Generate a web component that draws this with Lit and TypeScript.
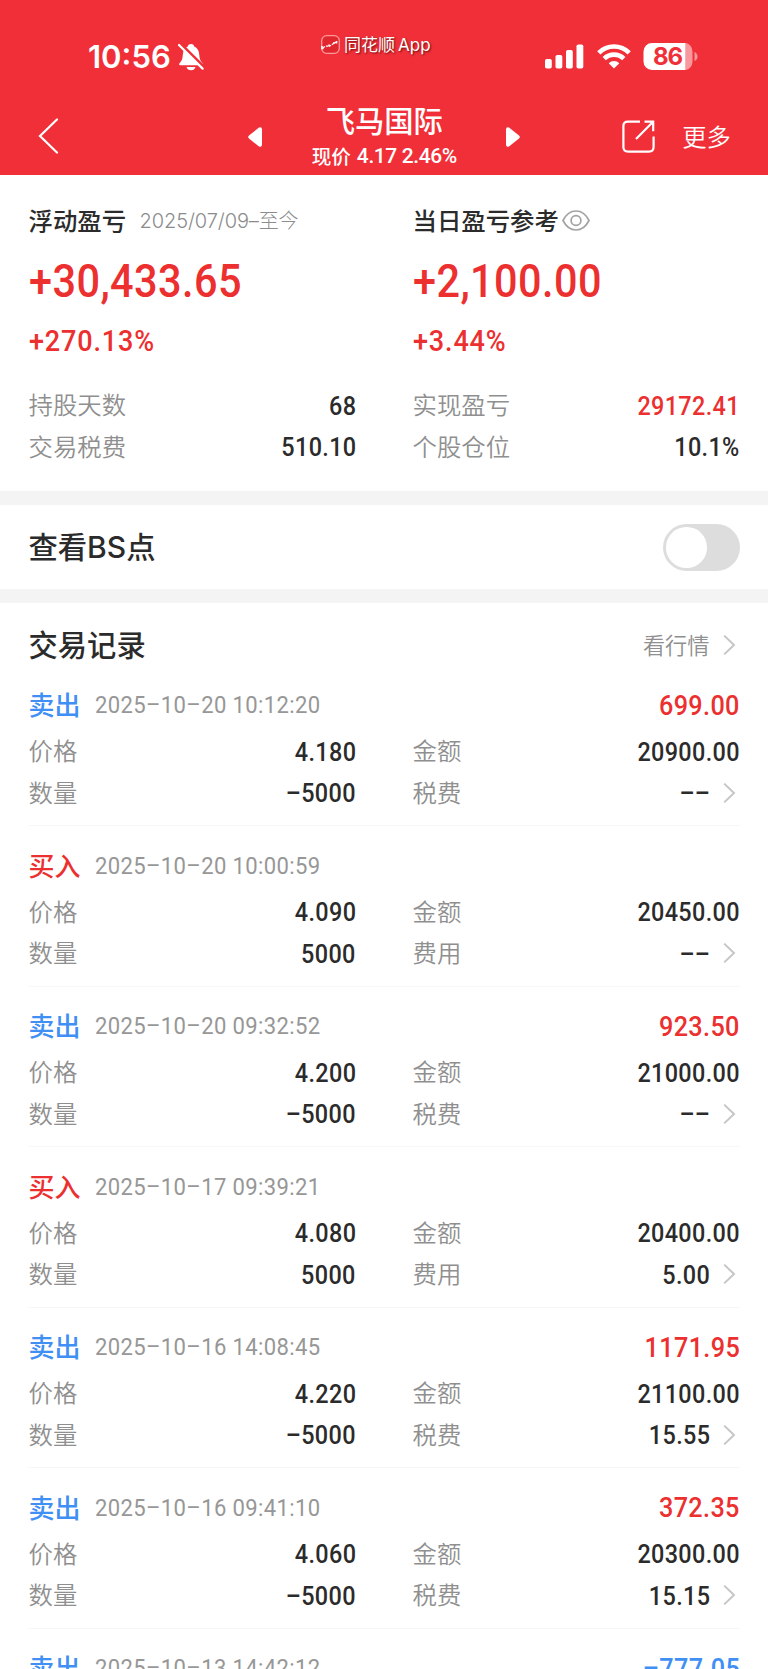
import { LitElement, html, css, svg, nothing } from "lit";
import { customElement, property } from "lit/decorators.js";

interface Trade {
  side: "buy" | "sell";
  time: string;
  profit?: string;
  loss?: boolean;
  price: string;
  qty: string;
  amount: string;
  fee: string;
}

const trades: Trade[] = [
  { side: "sell", time: "2025–10–20 10:12:20", profit: "699.00", price: "4.180", qty: "–5000", amount: "20900.00", fee: "––" },
  { side: "buy", time: "2025–10–20 10:00:59", price: "4.090", qty: "5000", amount: "20450.00", fee: "––" },
  { side: "sell", time: "2025–10–20 09:32:52", profit: "923.50", price: "4.200", qty: "–5000", amount: "21000.00", fee: "––" },
  { side: "buy", time: "2025–10–17 09:39:21", price: "4.080", qty: "5000", amount: "20400.00", fee: "5.00" },
  { side: "sell", time: "2025–10–16 14:08:45", profit: "1171.95", price: "4.220", qty: "–5000", amount: "21100.00", fee: "15.55" },
  { side: "sell", time: "2025–10–16 09:41:10", profit: "372.35", price: "4.060", qty: "–5000", amount: "20300.00", fee: "15.15" },
  { side: "sell", time: "2025–10–13 14:42:12", profit: "–777.05", loss: true, price: "4.080", qty: "–5000", amount: "20400.00", fee: "15.20" },
];

const chevron = html`<svg class="chev" width="13" height="22" viewBox="0 0 13 22" fill="none">
  ${svg`<path d="M1.2 1.6L11 11L1.2 20.4" stroke="#c6c6c6" stroke-width="2"/>`}
</svg>`;

const shared = css`
  :host { display: block; }
  * { box-sizing: border-box; }
  svg { display: block; flex: none; }
  .num {
    display: block;
    font-family: Roboto, "Noto Sans CJK SC", sans-serif;
    font-size: 26px;
    font-weight: 500;
    letter-spacing: 0.400px;
    line-height: 30px;
    color: #2b2b2b;
    padding-top: 1px;
    white-space: nowrap;
    margin-right: -0.600px;
    transform: scaleX(0.9);
    transform-origin: right center;
  }
  .lab { font-size: 24.400px; font-weight: 350; line-height: 36px; color: #8f8f8f; white-space: nowrap; padding-bottom: 2px; }
  .pair { display: flex; align-items: center; justify-content: space-between; height: 41.400px; }
  .red { color: #ec2f2f; }
  .chev { margin-left: 13px; margin-right: 4px; }
  .fee { display: flex; align-items: center; }
`;

@customElement("status-bar")
class StatusBar extends LitElement {
  static styles = css`
    :host { display: grid; grid-template-columns: 233px auto 1fr; height: 90px; padding: 0 70px 0 88px; }
    svg { display: block; flex: none; }
    .left { display: flex; align-items: center; gap: 7px; height: 114px; }
    .time { font: 600 31px/36px Inter, sans-serif; letter-spacing: 0; }
    .app { display: flex; align-items: center; gap: 4px; height: 88px; font-size: 17px; letter-spacing: 0; text-shadow: 1px 1px 2px rgba(60, 0, 0, 0.75); }
    .app span { white-space: nowrap; line-height: 24px; }
    .latin { font-family: Inter, sans-serif; font-size: 17px; margin-left: 3px; }
    .right { display: flex; align-items: center; justify-content: flex-end; height: 113px; }
    .wifi { margin: 0 12px 0 13px; }
    .cell { font: 700 24px Inter, sans-serif; fill: #f12f38; }
  `;
  render() {
    return html`
      <div class="left">
        <span class="time">10:56</span>
        <svg width="26" height="28" viewBox="0 0 26 28" fill="none">
          <path d="M13 1c2 0 3 1.200 3.200 2.600C19.500 5 21 8 21.300 12c.3 4 1 6 3.200 8.200.8.900.4 2-.8 2H2.300c-1.200 0-1.600-1.100-.8-2C3.800 18 4.500 16 4.800 12 5.100 8 6.500 5 9.800 3.600 10 2.200 11 1 13 1z" fill="#fff"/>
          <path d="M8.500 24h9c-.5 2-2.200 3.300-4.500 3.300S9 26 8.500 24z" fill="#fff"/>
          <path d="M2.600 .8L26.500 24.500" stroke="#f12f38" stroke-width="3"/>
          <path d="M1 2L24.600 25.600" stroke="#fff" stroke-width="2.200" stroke-linecap="round"/>
        </svg>
      </div>
      <div class="app">
        <svg width="19" height="19" viewBox="0 0 19 19" fill="none">
          <rect x=".7" y=".7" width="17.600" height="17.600" rx="5" fill="#e0262f" stroke="#f99" stroke-width="1.300"/>
          <path d="M2 12.500l3.500-1.500 3 .2 2.500-1.700 3.500-2 2-1" stroke="#fff" stroke-width="1.200" stroke-dasharray="2.200 1"/>
          <path d="M1 11v2.500h1.600M8 9.500v2M13 7v2M15.500 6v2.500" stroke="#fff" stroke-width="1.600"/>
        </svg>
        <span>同花顺<span class="latin">App</span></span>
      </div>
      <div class="right">
        <svg width="39" height="25" viewBox="0 0 39 25" fill="#fff">
          <rect x="0" y="15" width="6.800" height="9.500" rx="1.800"/><rect x="10.500" y="11" width="6.800" height="13.500" rx="1.800"/>
          <rect x="21" y="6" width="6.800" height="18.500" rx="1.800"/><rect x="31.500" y=".5" width="6.800" height="24" rx="1.800"/>
        </svg>
        <svg class="wifi" width="34" height="25" viewBox="0 0 34 25" fill="none">
          <path d="M1.800 8.800a21.500 21.500 0 0 1 30.400 0" stroke="#fff" stroke-width="4.600"/>
          <path d="M7.200 14.600a14 14 0 0 1 19.600 0" stroke="#fff" stroke-width="4.600"/>
          <path d="M17 24.500l-5.300-5.300a7.600 7.600 0 0 1 10.600 0z" fill="#fff"/>
        </svg>
        <svg width="55" height="27" viewBox="0 0 55 27">
          <path d="M9 0H42.500V27H9a8.500 8.500 0 0 1-8.500-8.500V8.500A8.500 8.500 0 0 1 9 0z" fill="#fff"/>
          <path d="M42.500 0a7.500 8.500 0 0 1 7 8.500v10a7.500 8.500 0 0 1-7 8.500z" fill="#fff" opacity=".5"/>
          <path d="M51.500 9q3 1.500 3 4.500t-3 4.500z" fill="#fff" opacity=".5"/>
          <text class="cell" x="25" y="22" text-anchor="middle" textLength="30">86</text>
        </svg>
      </div>`;
  }
}

@customElement("nav-bar")
class NavBar extends LitElement {
  static styles = css`
    :host { display: grid; grid-template-columns: 1fr 272px 1fr; height: 85px; padding: 0 37px 0 37.500px; }
    svg { display: block; flex: none; }
    .side { display: flex; align-items: center; height: 92px; }
    .end { justify-content: flex-end; gap: 27px; font-size: 24.400px; font-weight: 350; line-height: 36px; }
    .mid { display: flex; justify-content: space-between; align-items: flex-start; }
    .tri { margin-top: 37px; }
    .names { display: flex; flex-direction: column; align-items: center; padding-top: 9px; }
    .title { font-size: 29.300px; font-weight: 500; line-height: 40px; }
    .quote { display: flex; align-items: center; gap: 6px; margin-top: 2px; font-size: 19.600px; font-weight: 500; line-height: 28px; white-space: nowrap; }
    .q { font-family: Roboto, sans-serif; font-size: 21px; letter-spacing: -0.400px; padding-top: 1px; }
  `;
  render() {
    return html`
      <div class="side">
        <svg width="21" height="36" viewBox="0 0 21 36" fill="none"><path d="M19 1.500L2 18l17 16.500" stroke="#fff" stroke-width="2.200" stroke-linecap="round"/></svg>
      </div>
      <div class="mid">
        <svg class="tri" width="14" height="20" viewBox="0 0 14 20"><path d="M1 8.400L11 .6q3-1 3 2v15q0 3-3 2L1 11.600q-1.600-1.600 0-3.200z" fill="#fff"/></svg>
        <div class="names">
          <div class="title">飞马国际</div>
          <div class="quote"><span>现价</span><span class="q">4.17 2.46%</span></div>
        </div>
        <svg class="tri" width="14" height="20" viewBox="0 0 14 20"><path d="M13 8.400L3 .6Q0-.4 0 2.600v15q0 3 3 2l10-8q1.600-1.600 0-3.200z" fill="#fff"/></svg>
      </div>
      <div class="side end">
        <svg width="33" height="33" viewBox="0 0 33 33" fill="none" stroke="#fff" stroke-width="2.200">
          <path d="M18 1.600H6Q1.400 1.600 1.400 6v21q0 4.600 4.600 4.600h21q4.600 0 4.600-4.600V16.500"/>
          <path d="M22.500 1.600h8.700v9.600M30.600 2.200L14 19"/>
        </svg>
        <span>更多</span>
      </div>`;
  }
}

@customElement("profit-summary")
class ProfitSummary extends LitElement {
  static styles = [shared, css`
    :host { display: grid; grid-template-columns: 1fr 1fr; column-gap: 57px; height: 316px; padding: 28px 28.500px 0; }
    .head { display: flex; align-items: center; height: 34px; font-size: 24.400px; font-weight: 500; color: #2b2b2b; white-space: nowrap; }
    .name { padding-bottom: 2px; }
    .range { font: 300 20px/30px Inter, "Noto Sans CJK SC", sans-serif; color: #8c8c8c; margin-left: 13.500px; padding-top: 1px; letter-spacing: -0.100px; }
    .big, .pct { transform-origin: left center; padding-top: 0; }
    .big { font-size: 46px; line-height: 52px; letter-spacing: 0.500px; margin-top: 18px; }
    .pct { font-size: 30px; line-height: 36px; letter-spacing: 0.950px; margin-top: 16px; margin-bottom: 25.500px; }
    .eye { margin-left: 3px; }
  `];
  render() {
    return html`
      <section>
        <div class="head"><span class="name">浮动盈亏</span><span class="range">2025/07/09–至今</span></div>
        <div class="num big red">+30,433.65</div>
        <div class="num pct red">+270.13%</div>
        <div class="pair"><span class="lab">持股天数</span><span class="num">68</span></div>
        <div class="pair"><span class="lab">交易税费</span><span class="num">510.10</span></div>
      </section>
      <section>
        <div class="head"><span class="name">当日盈亏参考</span>
          <svg class="eye" width="28" height="21" viewBox="0 0 28 21" fill="none" stroke="#a3a3a3" stroke-width="1.700">
            <path d="M1 10.500C4 4.500 8.500 1 14 1s10 3.500 13 9.500C24 16.500 19.500 20 14 20S4 16.500 1 10.500z"/><circle cx="14" cy="10.500" r="4.900"/>
          </svg>
        </div>
        <div class="num big red">+2,100.00</div>
        <div class="num pct red">+3.44%</div>
        <div class="pair"><span class="lab">实现盈亏</span><span class="num red">29172.41</span></div>
        <div class="pair"><span class="lab">个股仓位</span><span class="num">10.1%</span></div>
      </section>`;
  }
}

@customElement("trade-record")
class TradeRecord extends LitElement {
  @property({ attribute: false }) trade!: Trade;
  static styles = [shared, css`
    :host { display: block; height: 160.500px; padding-top: 21.500px; border-bottom: 1.500px solid #f7f7f7; }
    .top { display: flex; align-items: center; height: 36px; margin-bottom: 7.500px; }
    .side { font-size: 26px; font-weight: 500; line-height: 36px; color: #ec2f2f; padding-bottom: 2px; }
    .sell { color: #3f8ff5; }
    .time { font-size: 24.500px; font-weight: 400; letter-spacing: 0.400px; color: #979797; margin-left: 14px; transform-origin: left center; padding-top: 0; }
    .profit { font-size: 28px; letter-spacing: 0.400px; margin-left: auto; }
    .num.loss { color: #3f8ff5; }
    .grid { display: grid; grid-template-columns: 1fr 1fr; column-gap: 57px; }
  `];
  render() {
    const t = this.trade;
    const sell = t.side === "sell";
    return html`
      <div class="top">
        <span class="side ${t.side}">${sell ? "卖出" : "买入"}</span>
        <span class="num time">${t.time}</span>
        ${t.profit ? html`<span class="num profit ${t.loss ? "loss" : "red"}">${t.profit}</span>` : nothing}
      </div>
      <div class="grid">
        <div class="pair"><span class="lab">价格</span><span class="num">${t.price}</span></div>
        <div class="pair"><span class="lab">金额</span><span class="num">${t.amount}</span></div>
        <div class="pair"><span class="lab">数量</span><span class="num">${t.qty}</span></div>
        <div class="pair"><span class="lab">${sell ? "税费" : "费用"}</span><span class="fee"><span class="num">${t.fee}</span>${chevron}</span></div>
      </div>`;
  }
}

@customElement("app-root")
class AppRoot extends LitElement {
  static styles = [shared, css`
    :host { display: block; height: 1669px; overflow: hidden; background: #fff; font-family: "Noto Sans CJK SC", sans-serif; }
    header { height: 175px; background: #f12f38; color: #fff; }
    .row { display: flex; align-items: center; justify-content: space-between; height: 112px; padding: 0 28.500px; border: solid #f4f4f4; border-width: 14px 0; }
    .heading { font-size: 29.300px; font-weight: 500; line-height: 40px; color: #2b2b2b; padding-bottom: 3px; }
    .bs { font-family: Inter, sans-serif; font-size: 30px; font-weight: 500; letter-spacing: 0; }
    .toggle { width: 77px; height: 47px; border-radius: 24px; background: #ddd; padding: 3.500px; }
    .knob { width: 40.500px; height: 40.500px; border-radius: 50%; background: #fff; }
    .records { padding: 0 28.500px; }
    .bar { display: flex; align-items: center; justify-content: space-between; height: 62.500px; padding-top: 21px; }
    .more { display: flex; align-items: center; font-size: 22.200px; font-weight: 350; color: #8f8f8f; }
    .more span { padding-bottom: 2px; }
  `];
  render() {
    return html`
      <header><status-bar></status-bar><nav-bar></nav-bar></header>
      <profit-summary></profit-summary>
      <div class="row">
        <span class="heading">查看<span class="bs">BS</span>点</span>
        <div class="toggle"><div class="knob"></div></div>
      </div>
      <div class="records">
        <div class="bar"><span class="heading">交易记录</span><span class="more"><span>看行情</span>${chevron}</span></div>
        ${trades.map((t) => html`<trade-record .trade=${t}></trade-record>`)}
      </div>`;
  }
}
